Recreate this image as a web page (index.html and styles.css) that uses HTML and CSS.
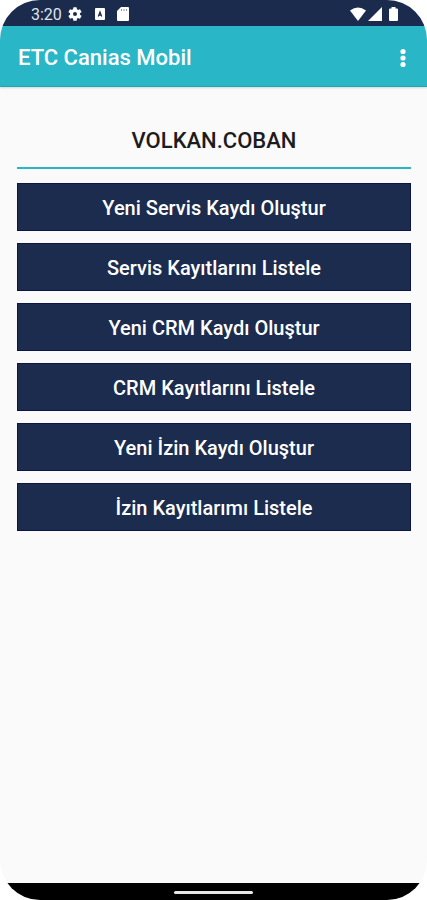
FILE: index.html
```html
<!DOCTYPE html>
<html lang="tr">
<head>
<meta charset="utf-8">
<meta name="viewport" content="width=device-width, initial-scale=1">
<title>ETC Canias Mobil</title>
<link rel="stylesheet" href="styles.css">
</head>
<body>
<div class="screen">
  <div class="status">
    <span class="clock">3:20</span>
    <div class="notices">
      <svg width="16" height="16" viewBox="0 0 24 24" aria-hidden="true"><path fill="currentColor" fill-rule="evenodd" d="M19.4 13a7.500 7.500 0 0 0 0-2l2.200-1.700a.5.5 0 0 0 .1-.6l-2-3.500a.5.500 0 0 0-.6-.2l-2.500 1a7.300 7.300 0 0 0-1.700-1l-.4-2.600a.5.5 0 0 0-.5-.4h-4a.5.5 0 0 0-.5.4L9.100 5a7.700 7.700 0 0 0-1.700 1l-2.500-1a.5.5 0 0 0-.6.200l-2 3.500a.5.5 0 0 0 .1.600L4.600 11a8 8 0 0 0 0 2l-2.200 1.700a.5.5 0 0 0-.1.600l2 3.500c.1.200.4.300.6.200l2.500-1a7.300 7.300 0 0 0 1.700 1l.4 2.600c0 .2.200.4.500.4h4c.3 0 .5-.2.500-.4l.4-2.600a7.700 7.700 0 0 0 1.700-1l2.500 1c.2.100.5 0 .6-.2l2-3.500a.5.500 0 0 0-.1-.6zM12 15a3 3 0 1 1 0-6 3 3 0 0 1 0 6z"/></svg>
      <svg width="12" height="12" viewBox="0 0 12 12" aria-hidden="true"><rect x="1" width="10" height="12" rx="1" fill="currentColor"/><path d="M4.300 8.500 6 4l1.700 4.500M4.700 7.200h2.600" fill="none" stroke="#1b2b4d" stroke-width="1.200"/></svg>
      <svg width="12" height="14" viewBox="0 0 12 14" aria-hidden="true"><path fill="currentColor" d="M4 0h7a1 1 0 0 1 1 1v12a1 1 0 0 1-1 1H1a1 1 0 0 1-1-1V4z"/><path stroke="#1b2b4d" stroke-opacity=".5" d="M4.500 2v2M7 2v2M9.500 2v2"/></svg>
    </div>
    <div class="signals">
      <svg width="16" height="14" viewBox="0 0 16 14" aria-hidden="true"><path fill="currentColor" d="M0 3.500Q8-2.500 16 3.500L8 14z"/></svg>
      <svg width="14" height="14" viewBox="0 0 14 14" aria-hidden="true"><path fill="currentColor" d="M14 0v14H0z"/></svg>
      <svg class="battery" width="9" height="14" viewBox="0 0 9 14" aria-hidden="true"><path fill="currentColor" d="M2.500 0h4v1.500H8a1 1 0 0 1 1 1V13a1 1 0 0 1-1 1H1a1 1 0 0 1-1-1V2.500a1 1 0 0 1 1-1h1.500z"/></svg>
    </div>
  </div>
  <header class="appbar">
    <h1 class="title">ETC Canias Mobil</h1>
    <button class="more" type="button" aria-label="Menü">
      <svg width="6" height="20" viewBox="0 0 6 20" aria-hidden="true"><g fill="currentColor"><circle cx="3" cy="3.500" r="2.600"/><circle cx="3" cy="10" r="2.600"/><circle cx="3" cy="16.500" r="2.600"/></g></svg>
    </button>
  </header>
  <main class="content">
    <h2 class="user">VOLKAN.COBAN</h2>
    <div class="actions">
      <button class="action" type="button">Yeni Servis Kaydı Oluştur</button>
      <button class="action" type="button">Servis Kayıtlarını Listele</button>
      <button class="action" type="button">Yeni CRM Kaydı Oluştur</button>
      <button class="action" type="button">CRM Kayıtlarını Listele</button>
      <button class="action" type="button">Yeni İzin Kaydı Oluştur</button>
      <button class="action" type="button">İzin Kayıtlarımı Listele</button>
    </div>
  </main>
  <div class="navbar"><span class="handle"></span></div>
</div>
</body>
</html>
```
FILE: styles.css
```css
* {
  box-sizing: border-box;
}

body {
  margin: 0;
  background: #fff;
  font-family: Roboto, "Liberation Sans", sans-serif;
}

button {
  border: 0;
  font: inherit;
}

svg {
  display: block;
}

.screen {
  display: flex;
  flex-direction: column;
  min-height: 100vh;
  border-radius: 40px;
  overflow: hidden;
  background: #fafafa;
}

.status {
  display: flex;
  align-items: center;
  padding: 2px 29px 0 31px;
  height: 26px;
  background: #1b2b4d;
  color: #fff;
}

.clock {
  padding-top: 2px;
  font-size: 16px;
  line-height: 20px;
  color: #dfe3ec;
}

.notices {
  display: flex;
  align-items: center;
  gap: 11px;
  margin-left: 5px;
}

.signals {
  display: flex;
  align-items: center;
  gap: 2px;
  margin-left: auto;
}

.battery {
  margin-left: 5px;
}

.appbar {
  display: flex;
  align-items: center;
  justify-content: space-between;
  height: 61px;
  padding: 3px 12px 0 18px;
  background: #29b6c6;
  border-bottom: 1px solid #20a4b3;
  box-shadow: 0 1px 2px rgba(0, 0, 0, 0.15);
  color: #fff;
}

.title {
  margin: 0;
  font-size: 22px;
  line-height: 28px;
  font-weight: 500;
}

.more {
  display: grid;
  place-items: center;
  width: 24px;
  height: 40px;
  padding: 0;
  background: none;
  color: inherit;
}

.content {
  flex: 1;
  padding: 24px 16px 24px 17px;
}

.user {
  margin: 0 0 14px;
  padding: 17px 0 13px;
  border-bottom: 2px solid #29b6c6;
  color: #1c1c1c;
  font-size: 22px;
  line-height: 26px;
  font-weight: 500;
  text-align: center;
}

.actions {
  display: grid;
  gap: 12px;
}

.action {
  padding: 12px 16px 10px;
  border: 1px solid #0c1544;
  background: #1b2c4e;
  color: #fff;
  font-size: 20px;
  line-height: 24px;
  font-weight: 500;
}

.navbar {
  display: grid;
  place-items: center;
  height: 17px;
  padding-top: 2px;
  background: #000;
}

.handle {
  width: 79px;
  height: 3px;
  border-radius: 2px;
  background: #e8e8e8;
}
```
